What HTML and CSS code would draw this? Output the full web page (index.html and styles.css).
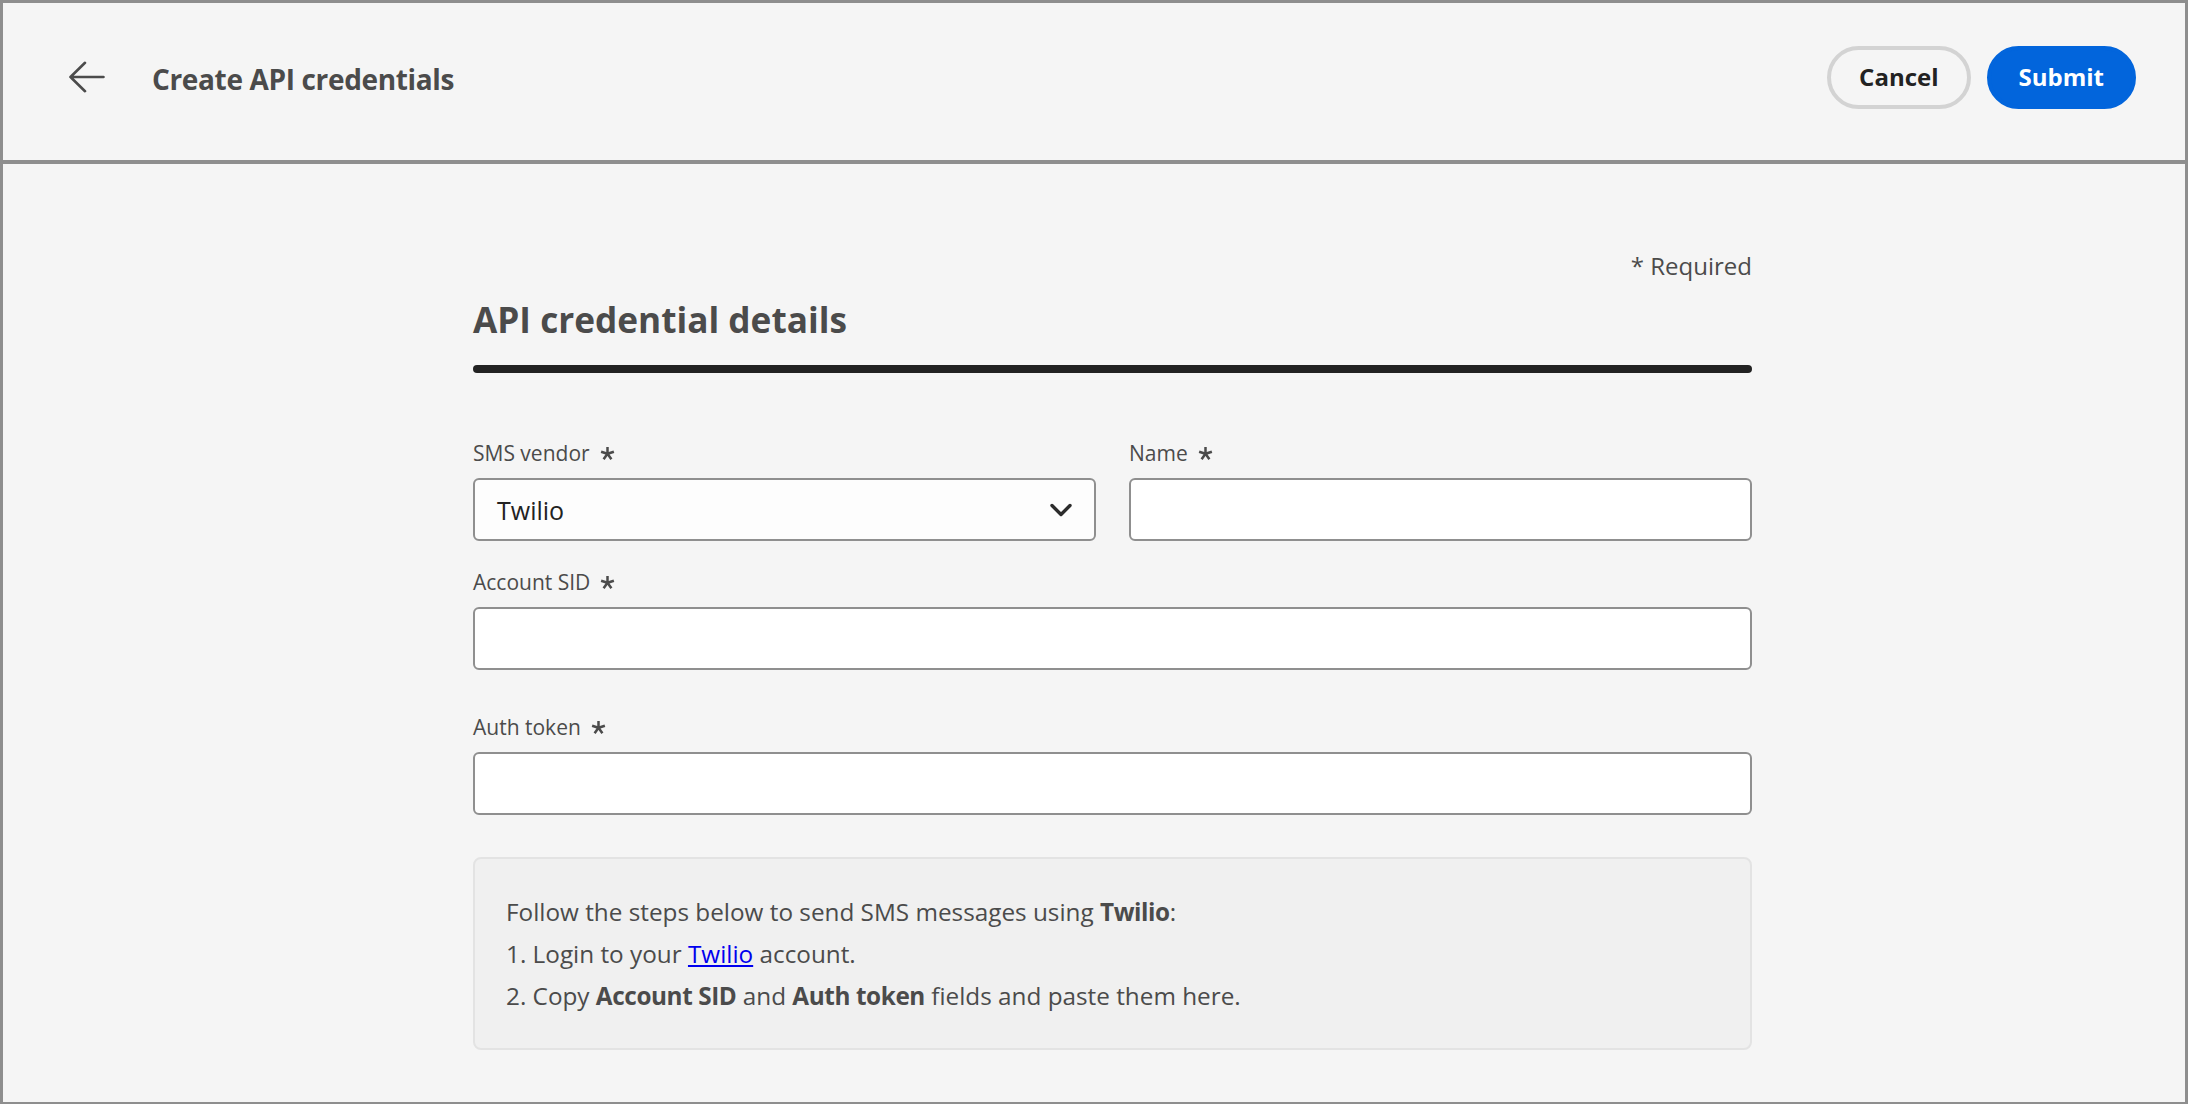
FILE: index.html
```html
<!DOCTYPE html>
<html lang="en">
<head>
<meta charset="utf-8">
<title>Create API credentials</title>
<link rel="stylesheet" href="styles.css">
</head>
<body>
<div class="frame">
  <header class="topbar">
    <div class="topbar-left">
      <svg class="back-icon" width="36" height="32" viewBox="0 0 36 32" aria-hidden="true">
        <path d="M1.5 16 H34.5 M16 1.8 L1.5 16 L16 30.2" fill="none" stroke="#4b4b4b" stroke-width="2.6" stroke-linecap="round" stroke-linejoin="round"/>
      </svg>
      <h1 class="page-title">Create API credentials</h1>
    </div>
    <div class="topbar-actions">
      <button class="btn btn-secondary" type="button">Cancel</button>
      <button class="btn btn-primary" type="button">Submit</button>
    </div>
  </header>
  <main class="content">
    <div class="form">
      <div class="required-note">* Required</div>
      <h2 class="section-title">API credential details</h2>
      <div class="section-rule"></div>

      <div class="row-two">
        <div class="field">
          <label class="field-label">SMS vendor
            <svg class="req" width="15" height="15" viewBox="0 0 15 15" aria-hidden="true"><path d="M7.5 1 V7.8 M7.5 7.8 L13.9 5.7 M7.5 7.8 L11.4 13.3 M7.5 7.8 L3.6 13.3 M7.5 7.8 L1.1 5.7" fill="none" stroke="#4b4b4b" stroke-width="2.5"/></svg>
          </label>
          <button class="control picker" type="button">
            <span class="picker-value">Twilio</span>
            <svg class="chevron" width="24" height="16" viewBox="0 0 24 16" aria-hidden="true"><path d="M3 3.5 L12 12.5 L21 3.5" fill="none" stroke="#2c2c2c" stroke-width="3.4" stroke-linecap="round" stroke-linejoin="round"/></svg>
          </button>
        </div>
        <div class="field">
          <label class="field-label">Name
            <svg class="req" width="15" height="15" viewBox="0 0 15 15" aria-hidden="true"><path d="M7.5 1 V7.8 M7.5 7.8 L13.9 5.7 M7.5 7.8 L11.4 13.3 M7.5 7.8 L3.6 13.3 M7.5 7.8 L1.1 5.7" fill="none" stroke="#4b4b4b" stroke-width="2.5"/></svg>
          </label>
          <input class="control" type="text">
        </div>
      </div>

      <div class="field field-account">
        <label class="field-label">Account SID
          <svg class="req" width="15" height="15" viewBox="0 0 15 15" aria-hidden="true"><path d="M7.5 1 V7.8 M7.5 7.8 L13.9 5.7 M7.5 7.8 L11.4 13.3 M7.5 7.8 L3.6 13.3 M7.5 7.8 L1.1 5.7" fill="none" stroke="#4b4b4b" stroke-width="2.5"/></svg>
        </label>
        <input class="control" type="text">
      </div>

      <div class="field field-auth">
        <label class="field-label">Auth token
          <svg class="req" width="15" height="15" viewBox="0 0 15 15" aria-hidden="true"><path d="M7.5 1 V7.8 M7.5 7.8 L13.9 5.7 M7.5 7.8 L11.4 13.3 M7.5 7.8 L3.6 13.3 M7.5 7.8 L1.1 5.7" fill="none" stroke="#4b4b4b" stroke-width="2.5"/></svg>
        </label>
        <input class="control" type="text">
      </div>

      <div class="info-box">
        <div>Follow the steps below to send SMS messages using <b>Twilio</b>:</div>
        <div>1. Login to your <a href="#" class="info-link">Twilio</a> account.</div>
        <div>2. Copy <b>Account SID</b> and <b>Auth token</b> fields and paste them here.</div>
      </div>
    </div>
  </main>
</div>
</body>
</html>
```

FILE: styles.css
```css
* {
  box-sizing: border-box;
}

html,
body {
  margin: 0;
  padding: 0;
}

body {
  font-family: "Open Sans", "Noto Sans", sans-serif;
  color: #4b4b4b;
  background: #f5f5f5;
}

.frame {
  width: 2188px;
  height: 1104px;
  border: 3px solid #8e8e8e;
  border-bottom-width: 2px;
  background: #f5f5f5;
  display: flex;
  flex-direction: column;
  overflow: hidden;
}

/* Header */
.topbar {
  flex: 0 0 161px;
  border-bottom: 4px solid #8e8e8e;
  display: flex;
  align-items: center;
  justify-content: space-between;
  padding: 0 49px 9px 66px;
}

.topbar-left {
  display: flex;
  align-items: center;
  gap: 47px;
}

.back-icon {
  display: block;
}

.page-title {
  margin: 3px 0 0;
  font-size: 28px;
  font-weight: 700;
  letter-spacing: -0.35px;
  line-height: 40px;
  color: #4b4b4b;
}

.topbar-actions {
  display: flex;
  align-items: center;
  gap: 16px;
}

.btn {
  height: 63px;
  padding: 0 28px;
  border-radius: 32px;
  border: 4px solid transparent;
  font-family: inherit;
  font-size: 24px;
  font-weight: 700;
  line-height: 1;
  cursor: pointer;
}

.btn-secondary {
  background: transparent;
  border-color: #d3d3d3;
  color: #222222;
}

.btn-primary {
  background: #0265dc;
  border-color: #0265dc;
  color: #ffffff;
}

/* Content */
.content {
  flex: 1 1 auto;
  padding: 85px 0 0 470px;
}

.form {
  width: 1279px;
  display: flex;
  flex-direction: column;
}

.required-note {
  text-align: right;
  font-size: 24px;
  line-height: 34px;
  color: #4b4b4b;
}

.section-title {
  margin: 12px 0 0;
  font-size: 35.2px;
  font-weight: 700;
  line-height: 48px;
  color: #4b4b4b;
}

.section-rule {
  margin-top: 22px;
  height: 8px;
  border-radius: 4px;
  background: #222222;
}

.row-two {
  margin-top: 65px;
  display: grid;
  grid-template-columns: 1fr 1fr;
  column-gap: 33px;
}

.field {
  display: flex;
  flex-direction: column;
}

.field-label {
  display: flex;
  align-items: center;
  gap: 10px;
  margin-bottom: 10px;
  font-size: 21px;
  line-height: 30px;
  color: #4b4b4b;
}

.req {
  display: block;
}

.control {
  height: 63px;
  width: 100%;
  border: 2px solid #8f8f8f;
  border-radius: 6px;
  background: #ffffff;
  font-family: inherit;
  font-size: 25px;
  color: #222222;
  padding: 0 22px;
  margin: 0;
  outline: none;
}

.picker {
  display: flex;
  align-items: center;
  justify-content: space-between;
  background: #fdfdfd;
  text-align: left;
  cursor: pointer;
}

.picker-value {
  font-size: 25px;
  color: #222222;
}

.chevron {
  display: block;
  margin-right: -1px;
}

.field-account {
  margin-top: 26px;
}

.field-auth {
  margin-top: 42px;
}

.info-box {
  margin-top: 42px;
  border: 2px solid #e3e3e3;
  border-radius: 8px;
  background: #f0f0f0;
  padding: 32px 31px 31px;
  font-size: 24.3px;
  line-height: 42px;
  color: #4b4b4b;
}

.info-box b {
  font-weight: 700;
  letter-spacing: -0.4px;
}

.info-link {
  color: #0000ee;
  text-decoration: underline;
}
```
